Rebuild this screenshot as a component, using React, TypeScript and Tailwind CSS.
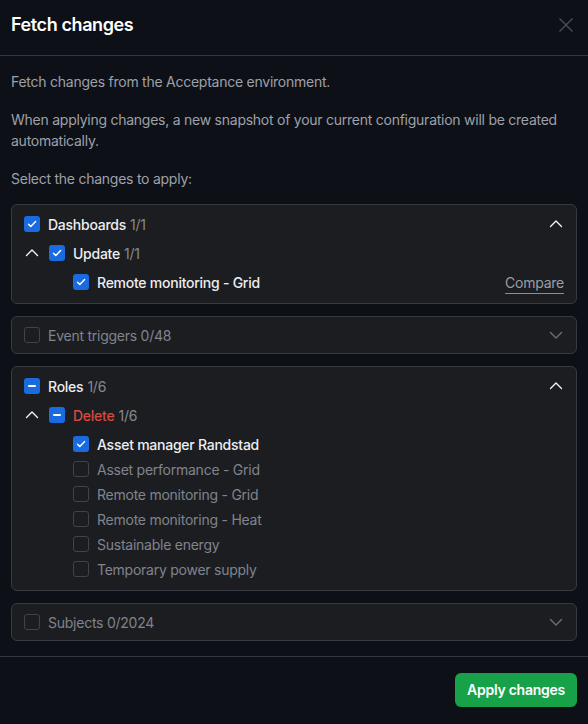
import { ReactNode } from "react";

type CheckState = "on" | "off" | "mixed";

function Box({ state }: { state: CheckState }) {
  if (state === "off") {
    return <span className="w-4 h-4 shrink-0 rounded-[3px] border border-[#40434b] bg-transparent" />;
  }
  return (
    <span className="w-4 h-4 shrink-0 rounded-[3px] bg-[#1a6be0] flex items-center justify-center">
      {state === "on" ? (
        <svg width="12" height="12" viewBox="0 0 12 12" fill="none">
          <path d="M2.5 6.3l2.3 2.3 4.8-5" stroke="white" strokeWidth="1.4" strokeLinecap="round" strokeLinejoin="round" />
        </svg>
      ) : (
        <span className="w-2 h-[2px] bg-white rounded-sm" />
      )}
    </span>
  );
}

function Chevron({ up, dim }: { up: boolean; dim?: boolean }) {
  return (
    <svg width="16" height="16" viewBox="0 0 16 16" fill="none" className="shrink-0">
      <path
        d={up ? "M2.5 10.5L8 5l5.5 5.5" : "M2.5 5.5L8 11l5.5-5.5"}
        stroke={dim ? "#6b6f78" : "#f3f4f6"}
        strokeWidth="1.4"
        strokeLinecap="round"
        strokeLinejoin="round"
      />
    </svg>
  );
}

function Panel({ children }: { children: ReactNode }) {
  return <div className="rounded-md border border-[#373a41] bg-[#1c1d21] px-3">{children}</div>;
}

function CollapsedPanel({ label, count }: { label: string; count: string }) {
  return (
    <Panel>
      <div className="h-9 flex items-center gap-2">
        <Box state="off" />
        <span className="text-[#80848d]">
          {label} {count}
        </span>
        <span className="ml-auto">
          <Chevron up={false} dim />
        </span>
      </div>
    </Panel>
  );
}

interface Item {
  name: string;
  checked: boolean;
}

function ExpandedPanel({
  title,
  count,
  state,
  group,
  groupCount,
  groupState,
  groupRed,
  items,
  compare,
}: {
  title: string;
  count: string;
  state: CheckState;
  group: string;
  groupCount: string;
  groupState: CheckState;
  groupRed?: boolean;
  items: Item[];
  compare?: boolean;
}) {
  return (
    <Panel>
      <div className="pt-[9px] pb-[11px]">
        <div className="h-5 flex items-center gap-2">
          <Box state={state} />
          <span className="font-medium text-[#eceef1]">{title}</span>
          <span className="text-[#858993] -ml-1">{count}</span>
          <span className="ml-auto">
            <Chevron up />
          </span>
        </div>
        <div className="mt-[9px] h-5 flex items-center">
          <Chevron up />
          <span className="ml-[9px]">
            <Box state={groupState} />
          </span>
          <span className={`ml-2 font-medium ${groupRed ? "text-[#d84a3f]" : "text-[#eceef1]"}`}>{group}</span>
          <span className="ml-1 text-[#858993]">{groupCount}</span>
        </div>
        <div className="mt-[9px] pl-[49px] flex flex-col gap-[5px]">
          {items.map((it) => (
            <div key={it.name} className="h-5 flex items-center gap-2">
              <Box state={it.checked ? "on" : "off"} />
              <span className={it.checked ? "font-medium text-[#eceef1]" : "text-[#80848d]"}>{it.name}</span>
              {compare && (
                <span className="ml-auto text-[#9a9ea7] underline underline-offset-[5px] decoration-[#8a8e97]">Compare</span>
              )}
            </div>
          ))}
        </div>
      </div>
    </Panel>
  );
}

export default function App() {
  return (
    <div
      className="w-[588px] h-[724px] bg-[#0d1017] flex flex-col text-sm tracking-[-0.25px]"
      style={{ fontFamily: "Inter, 'Noto Sans', sans-serif" }}
    >
      {/* Header */}
      <div className="h-[56px] px-[11px] pb-[5px] flex items-center border-b border-[#353841] shrink-0">
        <h1 className="text-lg font-semibold text-white tracking-[-0.4px]">Fetch changes</h1>
        <svg className="ml-auto mr-[3px]" width="16" height="16" viewBox="0 0 16 16" fill="none">
          <path d="M1.5 1.5l13 13M14.5 1.5l-13 13" stroke="#4a4e57" strokeWidth="1.4" />
        </svg>
      </div>

      {/* Body */}
      <div className="px-[11px] pt-[15px] pb-[15px] text-[#9ea1a9] leading-[21px] border-b border-[#353841]">
        <p>Fetch changes from the Acceptance environment.</p>
        <p className="mt-[17px]">When applying changes, a new snapshot of your current configuration will be created automatically.</p>
        <p className="mt-[17px]">Select the changes to apply:</p>

        <div className="mt-[15px] flex flex-col gap-3">
          <ExpandedPanel
            title="Dashboards"
            count="1/1"
            state="on"
            group="Update"
            groupCount="1/1"
            groupState="on"
            items={[{ name: "Remote monitoring - Grid", checked: true }]}
            compare
          />
          <CollapsedPanel label="Event triggers" count="0/48" />
          <ExpandedPanel
            title="Roles"
            count="1/6"
            state="mixed"
            group="Delete"
            groupCount="1/6"
            groupState="mixed"
            groupRed
            items={[
              { name: "Asset manager Randstad", checked: true },
              { name: "Asset performance - Grid", checked: false },
              { name: "Remote monitoring - Grid", checked: false },
              { name: "Remote monitoring - Heat", checked: false },
              { name: "Sustainable energy", checked: false },
              { name: "Temporary power supply", checked: false },
            ]}
          />
          <CollapsedPanel label="Subjects" count="0/2024" />
        </div>
      </div>

      {/* Footer */}
      <div className="px-[11px] pt-4 flex justify-end">
        <button className="h-[34px] px-3 rounded-md bg-[#17a24a] text-white font-semibold">Apply changes</button>
      </div>
    </div>
  );
}
